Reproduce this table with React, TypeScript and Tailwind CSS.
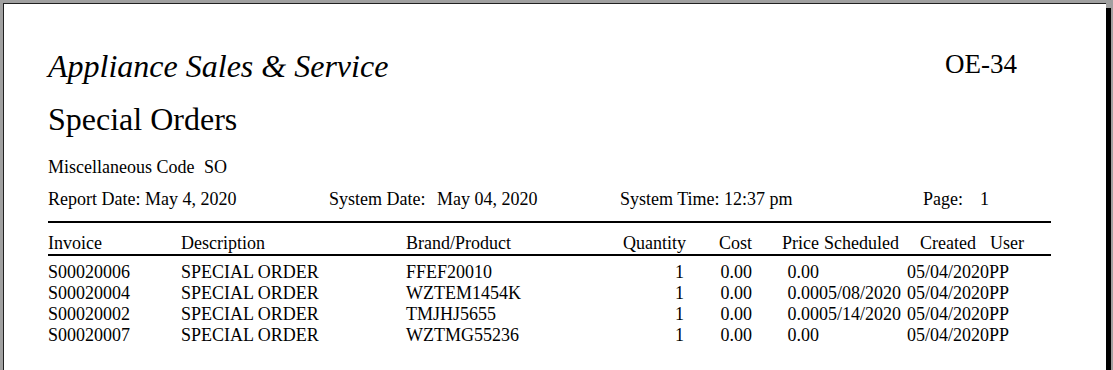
import React from 'react';

interface OrderRow {
  invoice: string;
  description: string;
  product: string;
  quantity: number;
  cost: string;
  price: string;
  scheduled: string;
  created: string;
  user: string;
}

const rows: OrderRow[] = [
  { invoice: 'S00020006', description: 'SPECIAL ORDER', product: 'FFEF20010', quantity: 1, cost: '0.00', price: '0.00', scheduled: '', created: '05/04/2020', user: 'PP' },
  { invoice: 'S00020004', description: 'SPECIAL ORDER', product: 'WZTEM1454K', quantity: 1, cost: '0.00', price: '0.00', scheduled: '05/08/2020', created: '05/04/2020', user: 'PP' },
  { invoice: 'S00020002', description: 'SPECIAL ORDER', product: 'TMJHJ5655', quantity: 1, cost: '0.00', price: '0.00', scheduled: '05/14/2020', created: '05/04/2020', user: 'PP' },
  { invoice: 'S00020007', description: 'SPECIAL ORDER', product: 'WZTMG55236', quantity: 1, cost: '0.00', price: '0.00', scheduled: '', created: '05/04/2020', user: 'PP' },
];

export default function App() {
  return (
    <div className="h-[370px] w-[1113px] overflow-hidden bg-[#a0a0a0] pt-[3px] pl-[3px] [font-family:'Liberation_Serif','Times_New_Roman',serif] text-black">
      <div className="w-[1103px] h-[420px] bg-white border-l border-t border-[#202020] shadow-[5px_5px_0_#000] pl-[44px] pt-[42px]">
        {/* Report heading */}
        <div className="flex items-start">
          <div className="w-[897px] text-[32px] leading-[40px] italic">Appliance Sales &amp; Service</div>
          <div className="text-[27px] leading-[37px]">OE-34</div>
        </div>
        <div className="mt-[13px] text-[32px] leading-[40px]">Special Orders</div>

        {/* Report info */}
        <div className="mt-[18px] flex text-[18px] leading-[21px] whitespace-pre">
          <span className="w-[156px]">Miscellaneous Code</span>
          <span>SO</span>
        </div>
        <div className="mt-[11px] flex text-[18px] leading-[21px] whitespace-pre">
          <span className="w-[97px]">Report Date:</span>
          <span className="w-[184px]">May 4, 2020</span>
          <span className="w-[108px]">System Date:</span>
          <span className="w-[183px]">May 04, 2020</span>
          <span className="w-[303px]">System Time: 12:37 pm</span>
          <span className="w-[57px]">Page:</span>
          <span>1</span>
        </div>

        <div className="mt-[11px] h-[2px] w-[1003px] bg-black" />

        {/* Column headers */}
        <div className="mt-[10px] flex text-[18px] leading-[21px] whitespace-pre">
          <span className="w-[133px]">Invoice</span>
          <span className="w-[225px]">Description</span>
          <span className="w-[217px]">Brand/Product</span>
          <span className="w-[62px] text-right">Quantity</span>
          <span className="w-[67px] text-right">Cost</span>
          <span className="w-[67px] text-right">Price</span>
          <span className="w-[80px] text-right">Scheduled</span>
          <span className="w-[77px] text-right">Created</span>
          <span className="pl-[14px]">User</span>
        </div>
        <div className="h-[2px] w-[1003px] bg-black" />

        {/* Order rows */}
        <div className="mt-[6px] flex flex-col text-[18px] leading-[21px] whitespace-pre">
          {rows.map((row) => (
            <div key={row.invoice} className="flex">
              <span className="w-[133px]">{row.invoice}</span>
              <span className="w-[225px]">{row.description}</span>
              <span className="w-[217px]">{row.product}</span>
              <span className="w-[61px] text-right">{row.quantity}</span>
              <span className="w-[68px] text-right">{row.cost}</span>
              <span className="w-[67px] text-right">{row.price}</span>
              <span className="w-[80px] text-right">{row.scheduled}</span>
              <span className="pl-[8px]">{row.created}</span>
              <span>{row.user}</span>
            </div>
          ))}
        </div>
      </div>
    </div>
  );
}
